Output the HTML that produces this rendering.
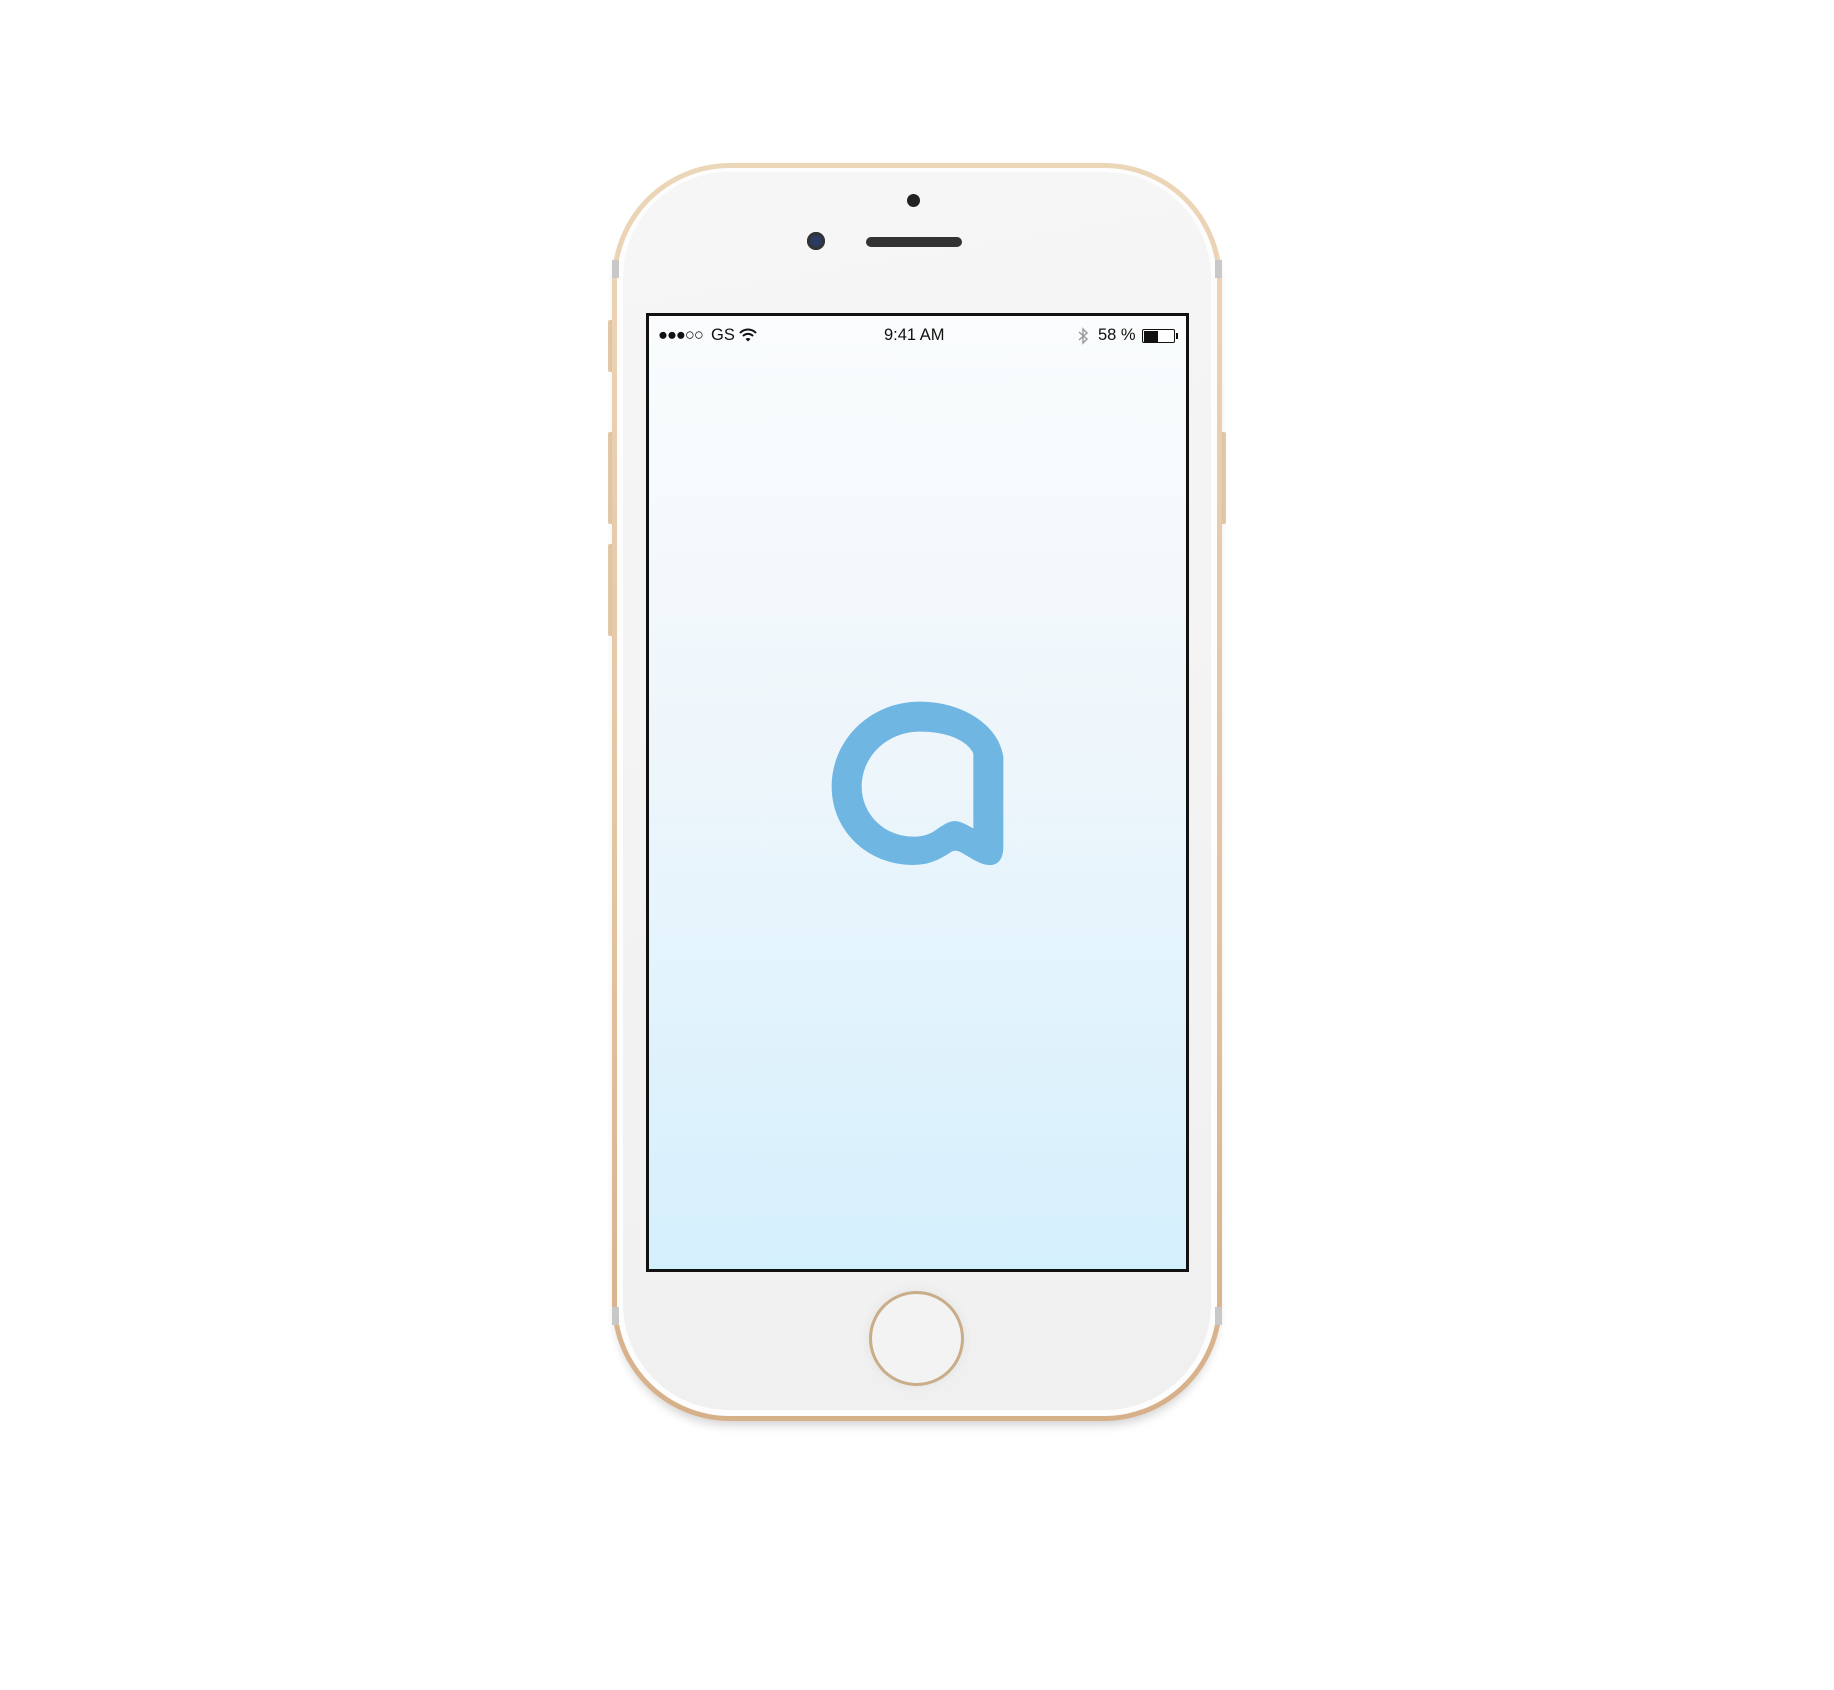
<!DOCTYPE html>
<html><head><meta charset="utf-8"><style>
html,body{margin:0;padding:0;background:#fff;width:1834px;height:1690px;overflow:hidden;position:relative;font-family:"Liberation Sans",sans-serif}
.abs{position:absolute}
#phone{left:612px;top:163px;width:610px;height:1258px;border-radius:118px;background:linear-gradient(#ecd6b8,#e2c3a0 60%,#d6b089);box-shadow:0 8px 10px -4px rgba(0,0,0,.18)}
#face{left:5px;top:5px;width:600px;height:1248px;border-radius:113px;background:#fdfdfd}
#face2{left:11px;top:9px;width:588px;height:1238px;border-radius:106px;background:linear-gradient(170deg,#f6f6f6,#f0f0f0)}
#screen{left:646px;top:313px;width:537px;height:953px;border:3px solid #111;background:linear-gradient(#fafcfd,#eef6fb 45%,#d5f0fd)}
.sb{font-size:16.5px;color:#111;top:326px}
</style></head><body>
<div class="abs" style="left:608px;top:320px;width:6px;height:52px;background:#e5cba8;border-radius:2px"></div>
<div class="abs" style="left:608px;top:432px;width:6px;height:92px;background:#e5cba8;border-radius:2px"></div>
<div class="abs" style="left:608px;top:544px;width:6px;height:92px;background:#e5cba8;border-radius:2px"></div>
<div class="abs" style="left:1220px;top:432px;width:6px;height:92px;background:#e5cba8;border-radius:2px"></div>
<div id="phone" class="abs">
 <div id="face" class="abs"></div>
 <div id="face2" class="abs"></div>
</div>
<div class="abs" style="left:612px;top:260px;width:7px;height:18px;background:#c8c8c8"></div>
<div class="abs" style="left:1215px;top:260px;width:7px;height:18px;background:#c8c8c8"></div>
<div class="abs" style="left:612px;top:1307px;width:7px;height:18px;background:#c8c8c8"></div>
<div class="abs" style="left:1215px;top:1307px;width:7px;height:18px;background:#c8c8c8"></div>
<div class="abs" style="left:907px;top:194px;width:13px;height:13px;border-radius:50%;background:#222"></div>
<div class="abs" style="left:807px;top:232px;width:18px;height:18px;border-radius:50%;background:#2a3a60;box-shadow:inset 0 0 0 3px #333"></div>
<div class="abs" style="left:866px;top:237px;width:96px;height:10px;border-radius:5px;background:#333"></div>
<div id="screen" class="abs"></div>
<div class="abs sb" style="left:658px;letter-spacing:-1px">●●●○○</div>
<div class="abs sb" style="left:711px">GS</div>
<svg class="abs" style="left:739px;top:328px" width="18" height="14" viewBox="0 0 18 14"><path d="M1 5 A11 11 0 0 1 17 5" fill="none" stroke="#111" stroke-width="2"/><path d="M4 8 A7 7 0 0 1 14 8" fill="none" stroke="#111" stroke-width="2"/><path d="M6.5 11 L9 13.5 L11.5 11 A3.5 3.5 0 0 0 6.5 11Z" fill="#111"/></svg>
<div class="abs sb" style="left:884px">9:41 AM</div>
<svg class="abs" style="left:1077px;top:327px" width="12" height="18" viewBox="0 0 12 18"><path d="M2 5 L10 12 L6 16 L6 2 L10 6 L2 13" fill="none" stroke="#999" stroke-width="1.4"/></svg>
<div class="abs sb" style="left:1098px">58 %</div>
<div class="abs" style="left:1142px;top:329px;width:31px;height:12px;border:1.5px solid #111;border-radius:2px;background:#fff"></div>
<div class="abs" style="left:1144px;top:331px;width:14px;height:11px;background:#111"></div>
<div class="abs" style="left:1176px;top:333px;width:2px;height:6px;background:#111"></div>
<svg class="abs" style="left:820px;top:690px" width="200" height="200" viewBox="0 0 600 600">
<path fill="#6fb6e3" fill-rule="evenodd" d="M550 200 C535 100 420 35 300 35 C150 35 35 150 35 290 C35 420 140 525 280 525 C330 525 365 505 395 485 C410 478 420 485 440 497 C470 515 490 527 515 525 C540 522 550 500 550 470 Z M460 190 C440 150 380 125 300 125 C200 125 125 200 125 290 C125 370 190 440 280 440 C330 440 345 420 370 405 C395 390 410 390 435 402 L460 415 Z"/>
</svg>
<div class="abs" style="left:869px;top:1291px;width:89px;height:89px;border-radius:50%;border:3px solid #c9ac88;background:#f3f3f3;box-shadow:0 0 12px rgba(0,0,0,.06)"></div>
</body></html>
